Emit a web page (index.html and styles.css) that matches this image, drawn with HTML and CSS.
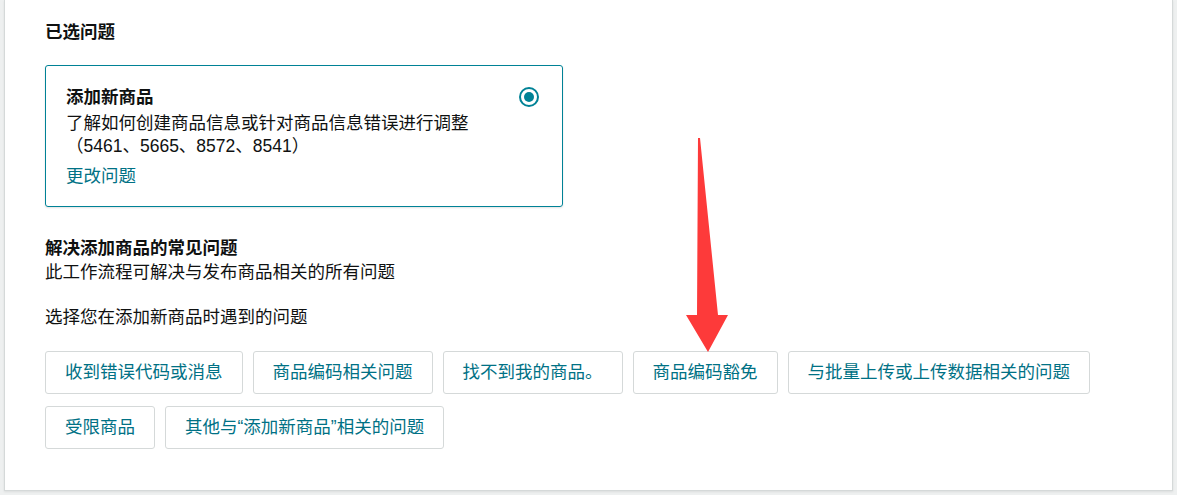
FILE: index.html
```html
<!DOCTYPE html>
<html lang="zh-CN">
<head>
    <meta charset="UTF-8">
    <meta name="viewport" content="width=device-width, initial-scale=1.0">
    <title>添加新商品</title>
    <link rel="stylesheet" href="styles.css">
</head>
<body>
    <div class="card">
        <h2 class="section-title">已选问题</h2>

        <div class="selected-box">
            <div class="selected-text">
                <h3 class="selected-title">添加新商品</h3>
                <p class="selected-desc">了解如何创建商品信息或针对商品信息错误进行调整（5461、5665、8572、8541）</p>
                <a href="#" class="change-link">更改问题</a>
            </div>
            <span class="radio"></span>
        </div>

        <h2 class="section-title issues-title">解决添加商品的常见问题</h2>
        <p class="plain">此工作流程可解决与发布商品相关的所有问题</p>
        <p class="plain prompt">选择您在添加新商品时遇到的问题</p>

        <div class="option-list">
            <button class="option">收到错误代码或消息</button>
            <button class="option">商品编码相关问题</button>
            <button class="option">找不到我的商品。</button>
            <button class="option">商品编码豁免</button>
            <button class="option">与批量上传或上传数据相关的问题</button>
            <button class="option">受限商品</button>
            <button class="option">其他与“添加新商品”相关的问题</button>
        </div>
    </div>

    <svg class="arrow" width="60" height="230" viewBox="0 0 60 230">
        <polygon points="18,8 20,8 38,185 48,185 28,222 6,185 17,185" fill="#fd3a3a"/>
    </svg>
</body>
</html>
```

FILE: styles.css
```css
body {
    margin: 0;
    background-color: #eef0f0;
    font-family: "Liberation Sans", "Noto Sans CJK SC", sans-serif;
    font-size: 17.5px;
    color: #0f1111;
    position: relative;
    height: 495px;
    overflow: hidden;
}

.card {
    margin: 0 4px 0 4px;
    background: #fff;
    border: 1px solid #d5d9d9;
    border-top: none;
    box-shadow: 0 1px 2px rgba(15, 17, 17, 0.08);
    padding: 20px 40px 41px 40px;
}

.section-title {
    margin: 0;
    font-size: 17.5px;
    font-weight: 700;
    line-height: 24px;
}

.selected-box {
    box-sizing: border-box;
    margin-top: 21px;
    width: 518px;
    border: 1px solid #008296;
    border-radius: 3px;
    padding: 19px 23px 18px 20px;
    display: flex;
    gap: 22px;
    align-items: flex-start;
    box-shadow: 0 1px 2px rgba(15, 17, 17, 0.12);
}

.selected-text {
    flex: 1;
}

.selected-title {
    margin: 0;
    font-size: 17.5px;
    font-weight: 700;
    line-height: 24px;
}

.selected-desc {
    margin: 3px 0 0 0;
    line-height: 23px;
}

.change-link {
    display: inline-block;
    margin-top: 7px;
    line-height: 23px;
    color: #007185;
    text-decoration: none;
}

.radio {
    flex: none;
    width: 16px;
    height: 16px;
    margin-top: 2px;
    border: 2px solid #008296;
    border-radius: 50%;
    display: flex;
    justify-content: center;
    align-items: center;
}

.radio::after {
    content: "";
    width: 10px;
    height: 10px;
    border-radius: 50%;
    background-color: #008296;
}

.issues-title {
    margin-top: 29px;
}

.plain {
    margin: 1px 0 0 0;
    line-height: 23px;
}

.prompt {
    margin-top: 22px;
}

.option-list {
    margin-top: 22px;
    display: flex;
    flex-wrap: wrap;
    gap: 12px 10px;
}

.option {
    font-family: inherit;
    font-size: 17.5px;
    line-height: 23px;
    padding: 9px 19px;
    background: #fff;
    color: #007185;
    border: 1px solid #d5d9d9;
    border-radius: 3px;
    cursor: pointer;
}

.arrow {
    position: absolute;
    left: 680px;
    top: 130px;
}
```
